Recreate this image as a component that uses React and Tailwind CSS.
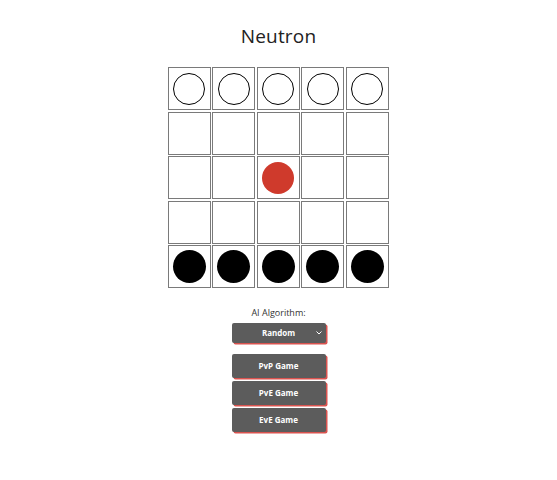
import { useState } from 'react';

const START = [
  ['w', 'w', 'w', 'w', 'w'],
  ['', '', '', '', ''],
  ['', '', 'n', '', ''],
  ['', '', '', '', ''],
  ['b', 'b', 'b', 'b', 'b'],
];

function Piece({ kind }) {
  if (kind === 'w') return <div className="w-[32px] h-[32px] rounded-full border-[1.5px] border-black bg-white" />;
  if (kind === 'b') return <div className="w-[33px] h-[33px] rounded-full bg-black" />;
  if (kind === 'n') return <div className="w-[32px] h-[32px] rounded-full bg-[#cf3a2c]" />;
  return null;
}

export default function App() {
  const [board] = useState(START);
  const [algo, setAlgo] = useState('Random');

  return (
    <div className="min-h-screen bg-white flex flex-col items-center font-['Open_Sans',sans-serif] text-[#222]">
      <h1 className="mt-[22px] text-[19px] leading-[28px] tracking-[0.2px]">Neutron</h1>

      {/* Board */}
      <div className="mt-[17px] grid grid-cols-5 gap-[1.5px] ml-[-1px]">
        {board.flat().map((cell, i) => (
          <div
            key={i}
            className="w-[43px] h-[43px] border border-[#7a7a7a] flex items-center justify-center"
          >
            <Piece kind={cell} />
          </div>
        ))}
      </div>

      {/* Controls */}
      <div className="mt-[19px] flex flex-col items-center">
        <label className="text-[9px] leading-[12px] text-[#333]">AI Algorithm:</label>
        <div className="relative mt-[4px] flex">
          <select
            value={algo}
            onChange={(e) => setAlgo(e.target.value)}
            className="appearance-none block w-[94px] h-[20px] rounded-[2px] bg-[#5c5c5c] text-white text-[8px] leading-[20px] font-bold text-center shadow-[1.5px_1.5px_0_#d9534f] outline-none"
          >
            <option>Random</option>
            <option>Minimax</option>
          </select>
          <svg className="absolute right-[4px] top-[8px] pointer-events-none" width="6" height="4" viewBox="0 0 6 4">
            <path d="M0.5 0.5 L3 3 L5.5 0.5" stroke="white" strokeWidth="1" fill="none" />
          </svg>
        </div>

        <div className="mt-[11px] flex flex-col gap-[3px]">
          {['PvP Game', 'PvE Game', 'EvE Game'].map((t) => (
            <button
              key={t}
              className="w-[94px] h-[24px] rounded-[2px] bg-[#5c5c5c] text-white text-[8px] font-bold shadow-[1.5px_1.5px_0_#d9534f]"
            >
              {t}
            </button>
          ))}
        </div>
      </div>
    </div>
  );
}
